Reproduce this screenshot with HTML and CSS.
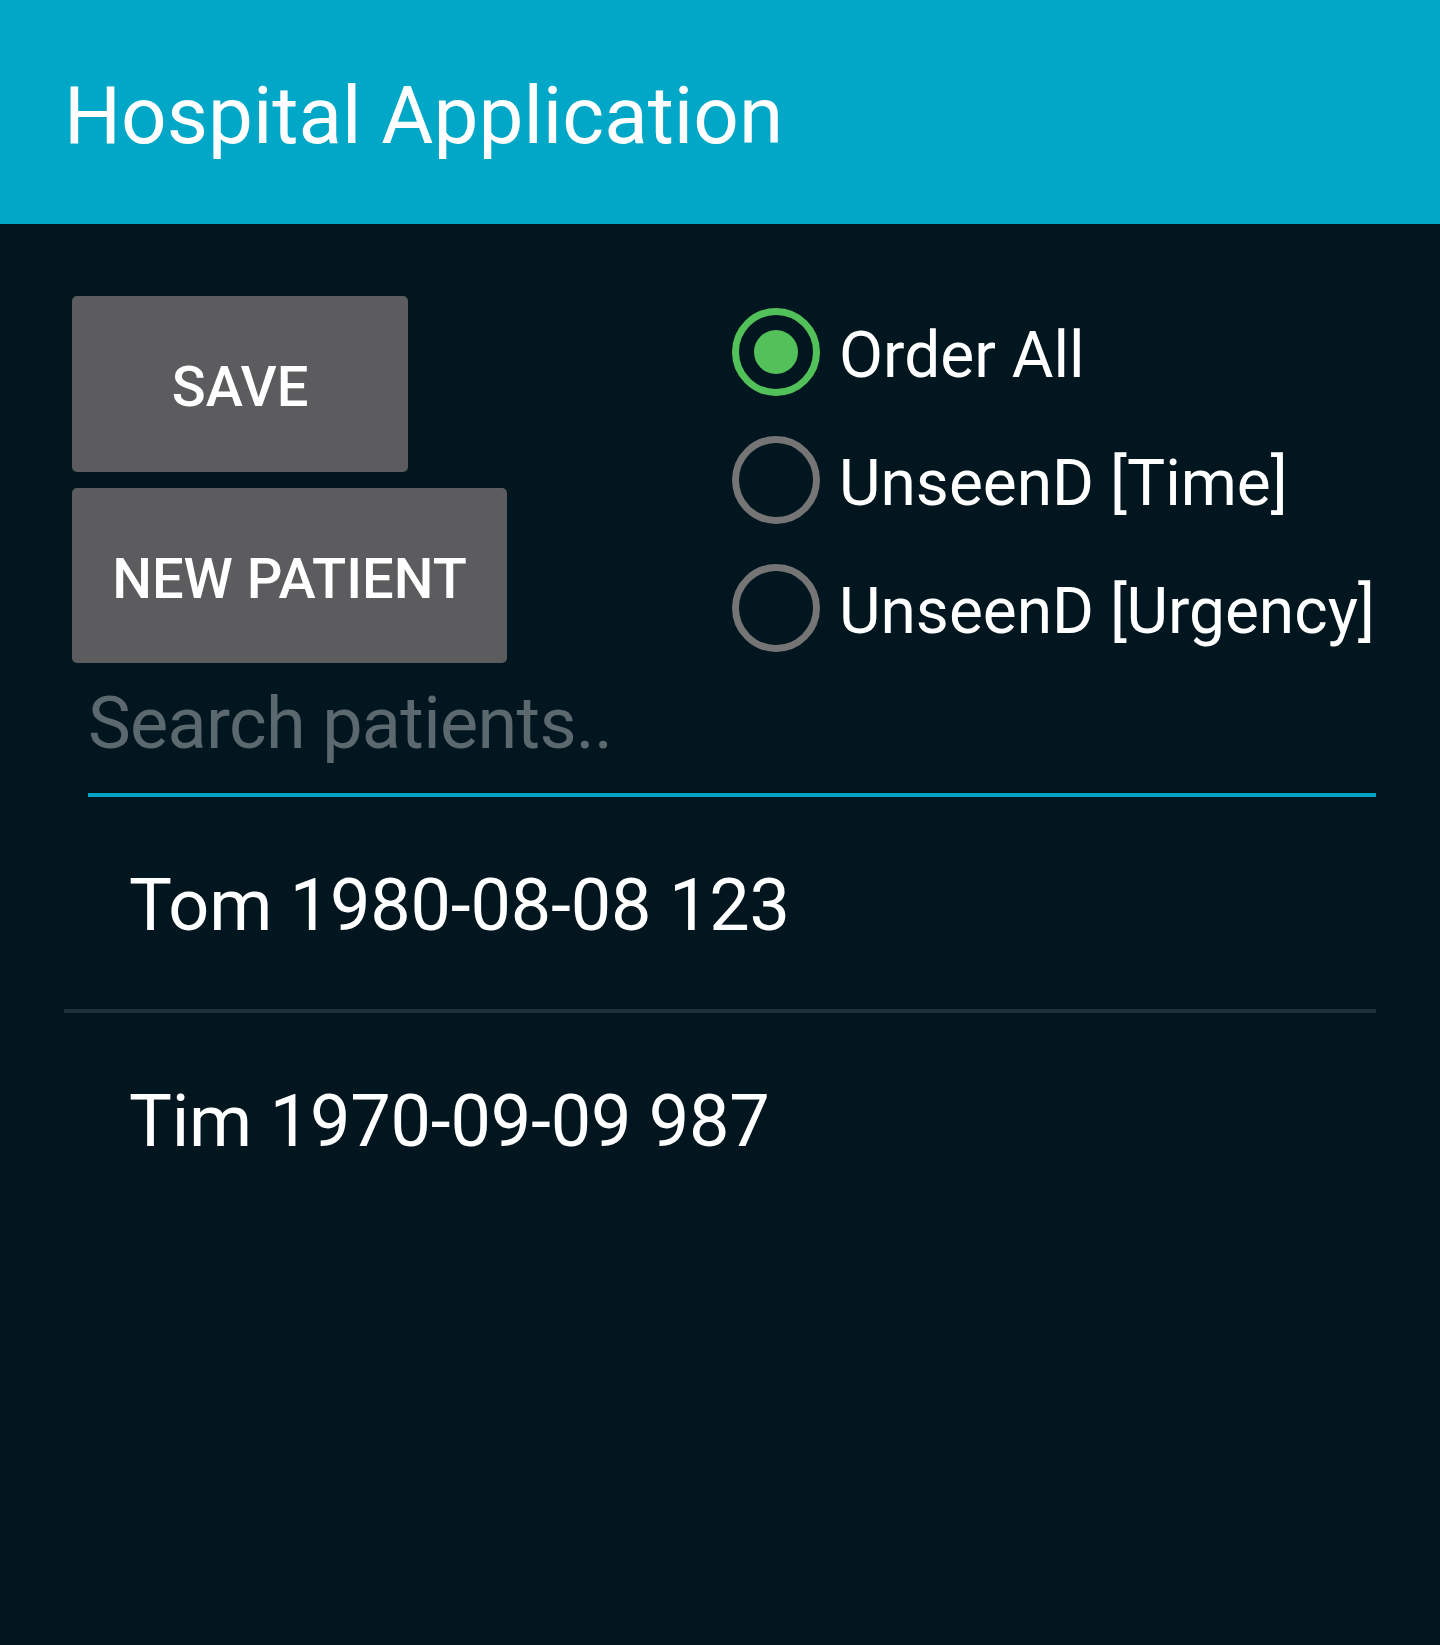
FILE: index.html
```html
<!DOCTYPE html>
<html>
<head>
<meta charset="utf-8">
<link rel="stylesheet" href="styles.css">
</head>
<body>
<header class="appbar">
  <h1 class="title">Hospital Application</h1>
</header>
<main class="content">
  <section class="controls">
    <div class="buttons">
      <button class="btn btn-save">SAVE</button>
      <button class="btn btn-new">NEW PATIENT</button>
    </div>
    <div class="radios">
      <label class="radio checked"><span class="ring"><span class="dot"></span></span><span class="rlabel">Order All</span></label>
      <label class="radio"><span class="ring"></span><span class="rlabel">UnseenD [Time]</span></label>
      <label class="radio"><span class="ring"></span><span class="rlabel">UnseenD [Urgency]</span></label>
    </div>
  </section>
  <div class="search">
    <div class="search-input">Search patients..</div>
  </div>
  <ul class="list">
    <li class="row">Tom 1980-08-08 123</li>
    <li class="row">Tim 1970-09-09 987</li>
  </ul>
</main>
</body>
</html>
```
FILE: styles.css
```css
html, body {
  margin: 0;
  padding: 0;
}
body {
  width: 1440px;
  min-height: 1645px;
  background: #01161f;
  font-family: Roboto, "Noto Sans", "Liberation Sans", sans-serif;
  color: #ffffff;
}
.appbar {
  height: 224px;
  background: #00a7c7;
  display: flex;
  align-items: flex-start;
  padding-left: 64px;
  box-sizing: border-box;
}
.title {
  margin: 0;
  margin-top: 69px;
  font-weight: 400;
  font-size: 80px;
  line-height: 94px;
  color: #ffffff;
}
.content {
  padding: 64px 64px 0 64px;
}
.controls {
  display: flex;
  height: 384px;
}
.buttons {
  width: 656px;
  display: flex;
  flex-direction: column;
  align-items: flex-start;
  gap: 16px;
  padding: 8px 0 0 8px;
  box-sizing: border-box;
}
.btn {
  border: none;
  background: #5c5c5e;
  color: #ffffff;
  font-family: Roboto, "Noto Sans", "Liberation Sans", sans-serif;
  font-weight: 500;
  font-size: 56px;
  border-radius: 5px;
  height: 176px;
  padding: 6px 0 0 0;
  white-space: nowrap;
  text-align: center;
}
.btn-save {
  width: 336px;
}
.btn-new {
  width: 435px;
  height: 175px;
}
.radios {
  display: flex;
  flex-direction: column;
  padding-left: 12px;
}
.radio {
  height: 128px;
  display: flex;
  align-items: center;
}
.ring {
  width: 74px;
  height: 74px;
  border: 7px solid #757575;
  border-radius: 50%;
  display: flex;
  align-items: center;
  justify-content: center;
  flex: none;
}
.radio.checked .ring {
  border-color: #52c15a;
}
.dot {
  width: 44px;
  height: 44px;
  border-radius: 50%;
  background: #52c15a;
}
.rlabel {
  margin-left: 19px;
  font-size: 64px;
  line-height: 76px;
  padding-top: 8px;
}
.search {
  padding: 9px 0 0 24px;
}
.search-input {
  font-size: 72px;
  line-height: 86px;
  letter-spacing: -0.7px;
  color: #5b696f;
  padding-bottom: 26px;
  border-bottom: 4px solid #00a5c6;
}
.list {
  list-style: none;
  margin: 0;
  padding: 0;
}
.row {
  font-size: 72px;
  line-height: 86px;
  letter-spacing: -0.2px;
  padding: 66px 0 60px 65px;
  border-bottom: 4px solid #1f3239;
}
.row:last-child {
  border-bottom: none;
}
```
